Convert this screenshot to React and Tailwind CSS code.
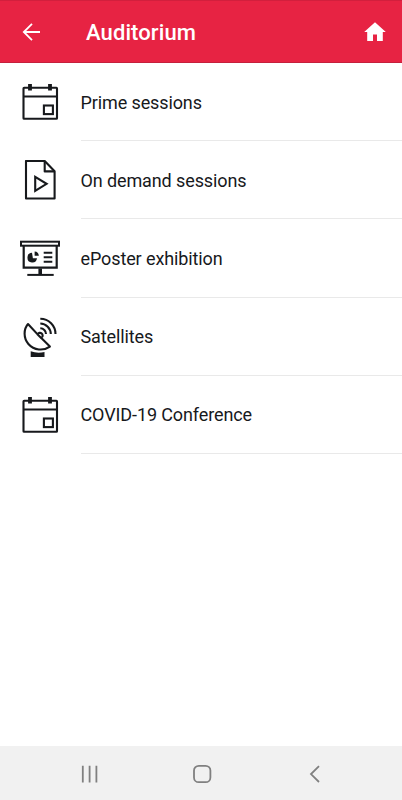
import React from 'react';

const CalendarIcon = () => (
  <svg viewBox="0 0 40 40" className="w-10 h-10" fill="none" stroke="#17191c" strokeWidth="2.1">
    <rect x="3.5" y="5.8" width="33.5" height="31" rx="0.6" />
    <path d="M3 14.5h34" />
    <path d="M10 2v6.4M30 2v6.4" strokeWidth="3.8" />
    <rect x="23.9" y="23.5" width="9" height="8.6" />
  </svg>
);

const VideoFileIcon = () => (
  <svg viewBox="0 0 40 40" className="w-10 h-10" fill="none" stroke="#17191c" strokeWidth="2.1" strokeLinejoin="round">
    <path d="M6 1H24.7L34.6 11.2V38.5H6Z" />
    <path d="M24.7 1V11.4H34.6" />
    <path d="M15.2 16.9V30.9L26.6 23.8Z" strokeLinejoin="miter" />
  </svg>
);

const PosterIcon = () => (
  <svg viewBox="0 0 40 40" className="w-10 h-10" fill="none" stroke="#17191c" strokeWidth="2">
    <rect x="1" y="3.7" width="38" height="4" />
    <path d="M3.7 8V29.7H36.7V8" strokeWidth="2.2" />
    <path d="M20.2 30.5V37" strokeWidth="3.6" />
    <path d="M7.3 36.9H33.7" />
    <path d="M23.7 14.7H32.3M23.7 19.2H32.3M23.7 23.7H32.3" />
    <path d="M12 14.8A4.8 4.8 0 1 0 17 20.2H12.9Z" fill="#17191c" stroke="none" />
    <path d="M14.6 13.6A4.4 4.4 0 0 1 18.8 17.8H14.6Z" fill="#17191c" stroke="none" />
  </svg>
);

const SatelliteIcon = () => (
  <svg viewBox="0 0 40 40" className="w-10 h-10" fill="none" stroke="#17191c" strokeWidth="2.1">
    <path
      d="M17.6 17.4L8 7C3.4 12.2 3.4 21.3 8.4 27C14 33.4 23.4 34.2 29.9 29.6L20.8 20.6M17.4 17.2L21.4 21.2"
      strokeLinejoin="round"
    />
    <path d="M17.6 17.2A2.7 2.7 0 1 1 21.9 20.4" />
    <path d="M20.3 11.3A5.8 5.8 0 0 1 26 17.1M20.3 6.5A10.6 10.6 0 0 1 30.8 17.1M20.3 1.8A15.2 15.2 0 0 1 35.5 17.1" />
    <path d="M10.7 34.2Q17 36.6 24.5 35V40H10.7Z" fill="#17191c" stroke="none" />
  </svg>
);

const MENU_ITEMS = [
  { label: 'Prime sessions', Icon: CalendarIcon },
  { label: 'On demand sessions', Icon: VideoFileIcon },
  { label: 'ePoster exhibition', Icon: PosterIcon },
  { label: 'Satellites', Icon: SatelliteIcon },
  { label: 'COVID-19 Conference', Icon: CalendarIcon }
];

const Header = () => (
  <header className="flex items-center h-[63px] shrink-0 bg-[#e72343] border-t border-b border-t-[#d21f3d] border-b-[#c4203c] text-white">
    <button className="ml-[21px] w-5 h-5" aria-label="Back">
      <svg viewBox="0 0 20 20" className="w-5 h-5" fill="none" stroke="currentColor" strokeWidth="1.8">
        <path d="M19 10H3M11 1.8L2.8 10L11 18.2" />
      </svg>
    </button>
    <h1 className="ml-[45px] mt-0.5 flex-1 text-[22px] leading-7 font-medium tracking-[0.1px]">Auditorium</h1>
    <button className="mr-[15px]" aria-label="Home">
      <svg viewBox="0 0 24 20" className="w-6 h-5" fill="currentColor">
        <path d="M12 0.2L1.2 10H4.2V19H10V12.6H14V19H19.8V10H22.8Z" />
      </svg>
    </button>
  </header>
);

const MenuRow = ({ label, Icon }) => (
  <li className="flex h-[78.2px] pl-5">
    <div className="flex items-center w-[60.5px] shrink-0">
      <Icon />
    </div>
    <div className="flex items-center flex-1 pt-0.5 border-b border-[#e9e9e9] text-lg text-[#17191c] tracking-[-0.11px]">
      {label}
    </div>
  </li>
);

const NavBar = () => (
  <nav className="grid grid-cols-3 h-[54px] pl-[34px] pr-8 pt-0.5 shrink-0 items-center justify-items-center bg-[#f1f1f1]">
    <svg viewBox="0 0 20 20" className="w-5 h-5" stroke="#808080" strokeWidth="1.8">
      <path d="M2.8 1.8V18.4M9.6 1.8V18.4M16.4 1.8V18.4" />
    </svg>
    <svg viewBox="0 0 20 20" className="w-5 h-5" fill="none" stroke="#808080" strokeWidth="1.8">
      <rect x="2" y="1.8" width="16.4" height="16.4" rx="4.8" />
    </svg>
    <svg viewBox="0 0 20 20" className="w-5 h-5" fill="none" stroke="#808080" strokeWidth="1.8">
      <path d="M15 2.2L7 10.1L15 18" />
    </svg>
  </nav>
);

const App = () => (
  <div className="flex flex-col w-full h-screen overflow-hidden bg-white font-[Roboto,sans-serif]">
    <Header />
    <ul className="flex-1">
      {MENU_ITEMS.map(item => (
        <MenuRow key={item.label} label={item.label} Icon={item.Icon} />
      ))}
    </ul>
    <NavBar />
  </div>
);

export default App;
